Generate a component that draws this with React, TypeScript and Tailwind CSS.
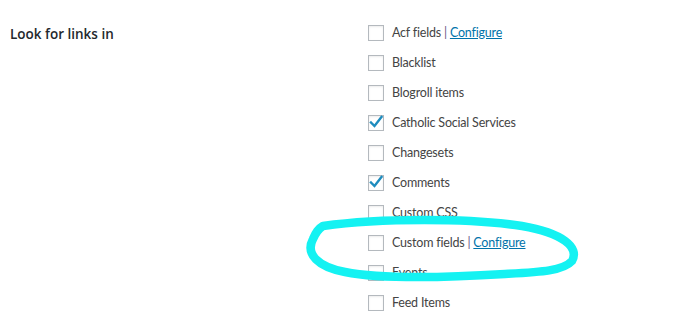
import React from 'react';

type Item = { label: string; checked?: boolean; configure?: boolean };

const items: Item[] = [
  { label: 'Acf fields', configure: true },
  { label: 'Blacklist' },
  { label: 'Blogroll items' },
  { label: 'Catholic Social Services', checked: true },
  { label: 'Changesets' },
  { label: 'Comments', checked: true },
  { label: 'Custom CSS' },
  { label: 'Custom fields', configure: true },
  { label: 'Events' },
  { label: 'Feed Items' },
];

const Checkbox: React.FC<{ checked?: boolean }> = ({ checked }) => (
  <span className="relative w-4 h-4 shrink-0 border border-[#b4b9be] bg-white shadow-[inset_0_1px_2px_rgba(0,0,0,0.08)]">
    {checked && (
      <svg className="absolute -left-px -top-[2px] w-4 h-4" viewBox="0 0 16 16" fill="none">
        <path d="M3 8.5 L6.5 12 L13.5 3" stroke="#1e8cbe" strokeWidth="2.4" strokeLinecap="square" />
      </svg>
    )}
  </span>
);

const App: React.FC = () => {
  return (
    <div className="relative w-[684px] h-[321px] bg-white overflow-hidden font-['Lato','Liberation_Sans',sans-serif]">
      <div className="flex pt-[18px]">
        <div className="w-[368px] pl-[10px] pt-[6px] text-[13.5px] font-semibold text-[#23282d] font-['Open_Sans',sans-serif]">
          Look for links in
        </div>
        <ul className="flex flex-col">
          {items.map((it) => (
            <li key={it.label} className="h-[30px] flex items-center gap-2 text-[12.5px] tracking-[-0.2px] text-[#444]">
              <Checkbox checked={it.checked} />
              <span>
                {it.label}
                {it.configure && (
                  <>
                    <span className="text-[#6b5a8a]"> | </span>
                    <a href="#" className="text-[#0073aa] underline">Configure</a>
                  </>
                )}
              </span>
            </li>
          ))}
        </ul>
      </div>
      <svg className="absolute left-0 top-0 pointer-events-none" width="684" height="321" viewBox="0 0 684 321" fill="none">
        <path
          d="M323 226 C380 218 470 218 522 226 C562 233 580 247 572 261 C563 271 540 272 505 274 C440 278 380 279 345 272 C318 267 305 254 313 239 C316 232 318 229 323 226"
          stroke="#14f2f2"
          strokeWidth="8.5"
          strokeLinecap="round"
          strokeLinejoin="round"
        />
      </svg>
    </div>
  );
};

export default App;
